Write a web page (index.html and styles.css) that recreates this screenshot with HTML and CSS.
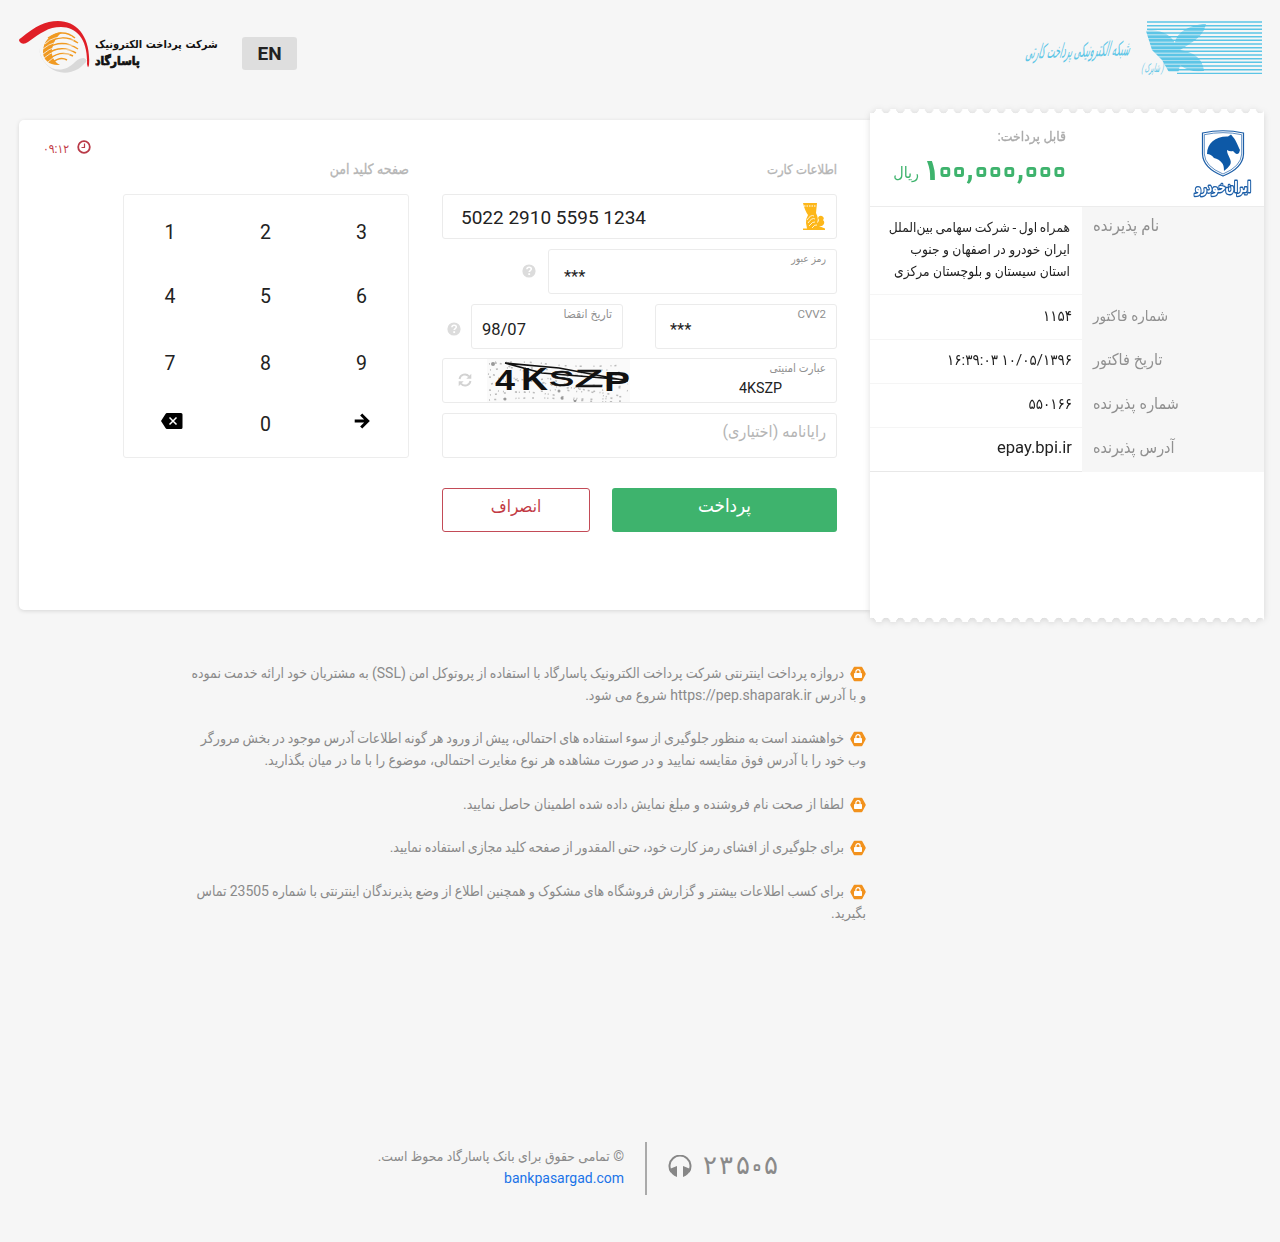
FILE: index.html
```html
<!DOCTYPE html>
<html lang="fa" dir="rtl">
<head>
<meta charset="utf-8">
<title>پرداخت الکترونیک پاسارگاد</title>
<link rel="stylesheet" href="styles.css">
</head>
<body>
<svg width="0" height="0" class="defs" aria-hidden="true">
  <symbol id="help" viewBox="0 0 14 14"><circle cx="7" cy="7" r="6.6" fill="#dcdcdc"/><path d="M4.9 5.3C5 3.8 6 3.2 7.1 3.2c1.200 0 2.200.7 2.200 1.900 0 1.500-2.100 1.500-2.100 3" fill="none" stroke="#fff" stroke-width="1.600"/><rect x="6.300" y="9.200" width="1.800" height="1.800" fill="#fff"/></symbol>
  <symbol id="lock" viewBox="0 0 16 16"><path d="M4.600.8h6.800c.5 0 .8.200 1 .6l3.200 5.900c.2.400.2.900 0 1.300l-3.200 6c-.2.400-.5.600-1 .6H4.600c-.5 0-.8-.2-1-.6L.4 8.600c-.2-.4-.2-.9 0-1.300l3.200-5.900c.2-.4.500-.6 1-.6z" fill="#f2921d"/><rect x="4" y="7" width="8" height="5" rx=".8" fill="#fff"/><path d="M5.900 7.300V5.800a2.100 2.100 0 0 1 4.200 0v1.500" fill="none" stroke="#fff" stroke-width="1.200"/></symbol>
</svg>
<header class="top">
  <svg class="shaparak" viewBox="0 0 242 60" width="242" height="60">
    <defs>
      <clipPath id="wing"><path d="M126 15C140 13 150 18 155 27C156 17 170 8 186 8Q184 20 168 29L160 34C174 36 183 43 184 55Q170 57 160 49L158 58H150L142 44L132 34Z"/></clipPath>
    </defs>
    <g stroke="#5cc5e6" stroke-width="1.400">
      <path d="M127 6H242M127 9.700H242M127 13.300H242M127 17H242M128 20.700H242M130 24.300H242M133 28H242M137 31.700H242M141 35.300H242M145 39H242M148 42.700H242M149 46.300H242M151 50H242M153 53.700H242M157 57.400H242"/>
      <path clip-path="url(#wing)" stroke-width="2.900" d="M120 9.700H242M120 13.300H242M120 17H242M120 20.700H242M120 24.300H242M120 28H242M120 31.700H242M120 35.300H242M120 39H242M120 42.700H242M120 46.300H242M120 50H242M120 53.700H242"/>
    </g>
    <g fill="#5cc5e6" text-anchor="middle">
      <text transform="translate(57 41) rotate(-2) skewX(-18)" font-size="20" textLength="104" lengthAdjust="spacingAndGlyphs">شبکه الکترونیکی پرداخت کارتی</text>
      <text transform="translate(132 56) skewX(-14)" font-size="12" textLength="22" lengthAdjust="spacingAndGlyphs">( شاپرک )</text>
    </g>
  </svg>
  <div class="brand">
    <button class="lang">EN</button>
    <div class="brand-text"><span class="brand-name">شرکت پرداخت الکترونیک</span><span class="brand-bank">پاسارگاد</span></div>
    <svg viewBox="0 0 74 58" width="74" height="58">
      <path d="M21 28A26 27 0 0 0 66 44Q71 40 66 38Q61 38 57 42C44 56 24 50 21 28Z" fill="#d9d9d9"/>
      <path d="M3 18C18 6 27 1 40 1C59 1 73 17 71 45C70 48 70 48 69 44C70 20 59 7 43 7C30 7 23 13 10 22Q6 25 3 23Q-1 20 3 18Z" fill="#e01f27"/>
      <path d="M44 12C32 13 25 22 25 32C25 40 32 46 42 45C36 42 33 36 34 29Q36 19 44 12Z" fill="#f09a22"/>
      <g fill="none" stroke="#f09a22" stroke-width="1.500"><path d="M30 18Q45 8 57 18M28 24Q44 12 60 23M28 29Q44 18 60 29M29 34Q43 24 58 33M31 39Q43 30 55 36M34 43Q42 36 49 40"/></g>
      <g fill="none" stroke="#f6f6f6" stroke-width=".8"><path d="M27 24Q35 15 54 17M25 29Q35 20 56 20M25 34Q36 24 56 25M26 38Q37 28 55 30M30 42Q39 33 52 34"/></g>
    </svg>
  </div>
</header>

<main class="checkout">
  <section class="ticket">
    <div class="teeth"></div>
    <div class="ticket-body">
      <div class="summary">
        <svg class="ikco" viewBox="0 0 60 68" width="60" height="68">
          <path d="M9.500 3Q30-1.500 50.500 3V24Q50 38 30 46Q10 38 9.500 24Z" fill="#fff" stroke="#1d5fa8" stroke-width="1.200"/>
          <path d="M11.300 4.700Q30 .6 48.700 4.700V24Q48 36.500 30 44Q12 36.500 11.300 24Z" fill="none" stroke="#1d5fa8" stroke-width=".7"/>
          <path d="M14 24C14 13 23 6 35 6.500L38 4.500L40 7C43 10 45 16 47 20L46 23Q44 25 42 23L40 21Q37 22 34 20C34 26 40 30 37 35Q35 38 31 41Q31 35 29 33Q26 29 21 28Q18 24 14 24Z" fill="#0d59a7"/>
          <text x="30" y="62" text-anchor="middle" font-size="15" font-weight="700" textLength="56" lengthAdjust="spacingAndGlyphs" fill="#fff" stroke="#1d5fa8" stroke-width="2.800" paint-order="stroke" stroke-linejoin="round">ایران‌خودرو</text>
        </svg>
        <div class="due">
          <span class="due-label">قابل پرداخت:</span>
          <div class="due-amount">
            <svg class="digits" direction="ltr" viewBox="0 0 140 36" width="140" height="36"><text y="26"><tspan class="one" x="5.500" y="27">۱</tspan><tspan x="19.300 33" y="26">۰۰</tspan><tspan class="comma" x="44">,</tspan><tspan x="55.300 69.300 83.300">۰۰۰</tspan><tspan class="comma" x="94.500">,</tspan><tspan x="105.300 119.300 133.300">۰۰۰</tspan></text></svg>
            <span>ریال</span>
          </div>
        </div>
      </div>
      <dl class="rows">
        <dt class="tall">نام پذیرنده</dt><dd class="tall"><span class="v1">همراه اول - شرکت سهامی بین‌الملل</span><span class="v2">ایران خودرو در اصفهان و جنوب</span><span class="v3">استان سیستان و بلوچستان مرکزی</span></dd>
        <dt class="narrow">شماره فاکتور</dt><dd class="first"><bdo dir="ltr">۱۱۵۴</bdo></dd>
        <dt>تاریخ فاکتور</dt><dd><bdo dir="ltr">۱۶:۳۹:۰۳ ۱۰/۰۵/۱۳۹۶</bdo></dd>
        <dt>شماره پذیرنده</dt><dd><bdo dir="ltr">۵۵۰۱۶۶</bdo></dd>
        <dt>آدرس پذیرنده</dt><dd class="site">epay.bpi.ir</dd>
      </dl>
    </div>
    <div class="teeth bottom"></div>
  </section>

  <section class="card">
    <div class="form">
      <h2>اطلاعات کارت</h2>
      <div class="field number">
        <svg viewBox="0 0 24 27" width="24" height="27"><path d="M1 0H15L14 10Q17 16 15 20Q18 18 16 15Q17 12 20 13Q23 15 21 17Q24 20 20 23H17L23 25.500V27H1V25.500H5L4 20Q4 15 6 12Q3 8 1 0Z" fill="#fdb71a"/><path d="M2 3H14" stroke="#fff" stroke-width="1" stroke-dasharray="1.500 1"/><path d="M5 17Q9 11 12 13M6 20Q10 14 13 16M7 23Q11 18 13 19M10 25Q13 21 15 22" stroke="#fff" stroke-width=".8" fill="none"/></svg>
        <span dir="ltr">5022 2910 5595 1234</span>
      </div>
      <div class="line"><div class="field pin"><label>رمز عبور</label><span>***</span></div><svg class="help pin-help" width="14" height="14"><use href="#help"/></svg></div>
      <div class="line"><div class="field cvv"><label>CVV2</label><span>***</span></div><div class="field expiry"><label>تاریخ انقضا</label><span>98/07</span></div><svg class="help" width="14" height="14"><use href="#help"/></svg></div>
      <div class="field captcha">
        <div class="captcha-input"><label>عبارت امنیتی</label><span>4KSZP</span></div>
        <svg class="captcha-image" viewBox="0 0 143 43" width="143" height="43" direction="ltr">
          <rect width="143" height="43" fill="#fafafa"/>
          <g fill="none" stroke="#bbb" stroke-width="1.500"><path stroke-dasharray="1 5 2 9 1 3 2 12" d="M2 5Q30 1 60 5T141 6M3 11Q40 5 80 14T141 11"/><path stroke-dasharray="2 7 1 4 1 11" d="M2 18Q50 25 90 15T141 20M4 25Q44 17 70 28T141 25M2 31Q40 36 80 29T141 32"/><path stroke-dasharray="1 4 2 7 2 10 1 2" d="M3 36Q36 30 72 37T141 36M2 41Q50 37 90 41T141 40M1 15L140 38M8 3L130 41"/></g>
          <g fill="#999"><circle cx="6" cy="5" r="2"/><circle cx="18" cy="40" r="1.500"/><circle cx="75" cy="39" r="1.500"/><circle cx="88" cy="42" r="1.300"/><circle cx="72" cy="32" r="1.500"/></g>
          <g font-family="Liberation Sans" fill="#111" stroke="#111" stroke-width=".7"><text x="8" y="31" font-size="30" textLength="20" lengthAdjust="spacingAndGlyphs" font-weight="700" stroke="none">4</text><text x="34" y="31" font-size="31" textLength="27" lengthAdjust="spacingAndGlyphs" font-weight="700" stroke="none">K</text><text x="62" y="27" font-size="22" textLength="25" lengthAdjust="spacingAndGlyphs">S</text><text x="88" y="28" font-size="24" textLength="28" lengthAdjust="spacingAndGlyphs">Z</text><text x="117" y="32" font-size="28" textLength="26" lengthAdjust="spacingAndGlyphs" font-weight="700" stroke="none">P</text></g>
          <path d="M18 4L72 9L141 22M18 4L55 14L141 21" fill="none" stroke="#111" stroke-width="1.700"/>
        </svg>
        <svg class="reload" viewBox="0 0 14 14" width="14" height="14"><path d="M1.500 6A5.500 5.500 0 0 1 11 3.300M12.500 8A5.500 5.500 0 0 1 3 10.700" fill="none" stroke="#d2d2d2" stroke-width="1.900"/><path d="M13.300.8V5.800H8.300ZM.7 13.200V8.200H5.700Z" fill="#d2d2d2"/></svg>
      </div>
      <div class="field email">رایانامه (اختیاری)</div>
      <div class="actions"><button class="pay">پرداخت</button><button class="cancel">انصراف</button></div>
    </div>
    <div class="secure">
      <h2>صفحه کلید امن</h2>
      <div class="keypad" dir="ltr">
        <span>1</span><span>2</span><span>3</span><span>4</span><span>5</span><span>6</span><span>7</span><span>8</span><span>9</span>
        <span class="icon"><svg viewBox="0 0 22 16" width="22" height="16"><path d="M6 0H20Q21.500 0 21.500 1.500V14.500Q21.500 16 20 16H6Q5 16 4.500 15L0 8L4.500 1Q5 0 6 0Z"/><path d="M8.500 4.500L15.500 11.500M15.500 4.500L8.500 11.500" stroke="#fff" stroke-width="1.500"/></svg></span><span>0</span><span class="icon"><svg viewBox="0 0 16 16" width="16" height="16"><path d="M.7 8H13M7.200 1.500L13.700 8L7.200 14.500" fill="none" stroke="#000" stroke-width="3"/></svg></span>
      </div>
    </div>
    <div class="timer" dir="ltr"><bdo dir="ltr">۰۹:۱۲</bdo><svg viewBox="0 0 14 14" width="14" height="14"><circle cx="7" cy="7" r="5.800" fill="none" stroke="#b93a48" stroke-width="1.800"/><path d="M7.500 3.500V7.500H4.500" fill="none" stroke="#b93a48" stroke-width="1.200"/></svg></div>
  </section>
</main>

<ul class="notes">
  <li><div><svg width="16" height="16"><use href="#lock"/></svg><span class="n1">دروازه پرداخت اینترنتی شرکت پرداخت الکترونیک پاسارگاد با استفاده از پروتوکل امن (SSL) به مشتریان خود ارائه خدمت نموده</span></div><div><span class="n2">و با آدرس https://pep.shaparak.ir شروع می شود.</span></div></li>
  <li><div><svg width="16" height="16"><use href="#lock"/></svg><span class="n3">خواهشمند است به منظور جلوگیری از سوء استفاده های احتمالی، پیش از ورود هر گونه اطلاعات آدرس موجود در بخش مرورگر</span></div><div><span class="n4">وب خود را با آدرس فوق مقایسه نمایید و در صورت مشاهده هر نوع مغایرت احتمالی، موضوع را با ما در میان بگذارید.</span></div></li>
  <li><div><svg width="16" height="16"><use href="#lock"/></svg><span class="n5">لطفا از صحت نام فروشنده و مبلغ نمایش داده شده اطمینان حاصل نمایید.</span></div></li>
  <li><div><svg width="16" height="16"><use href="#lock"/></svg><span class="n6">برای جلوگیری از افشای رمز کارت خود، حتی المقدور از صفحه کلید مجازی استفاده نمایید.</span></div></li>
  <li><div><svg width="16" height="16"><use href="#lock"/></svg><span class="n7">برای کسب اطلاعات بیشتر و گزارش فروشگاه های مشکوک و همچنین اطلاع از وضع پذیرندگان اینترنتی با شماره 23505 تماس</span></div><div><span class="n8">بگیرید.</span></div></li>
</ul>

<footer>
  <div class="phone">
    <svg class="number-text" direction="ltr" viewBox="0 0 76 36" width="76" height="36"><text y="24"><tspan x="7 23 40">۲۳۵</tspan><tspan class="zero" x="54">۰</tspan><tspan x="68">۵</tspan></text></svg>
    <svg viewBox="0 0 24 22" width="24" height="22"><path d="M3.300 17A10.500 10.500 0 1 1 20.700 17" fill="none" stroke="#878787" stroke-width="2"/><path d="M9 11V22Q3 20 1.500 14ZM15 11V22Q21 20 22.500 14Z" fill="#878787"/></svg></div>
  <div class="rights"><span class="copy">© تمامی حقوق برای بانک پاسارگاد محوظ است.</span><a>bankpasargad.com</a></div>
</footer>
</body>
</html>
```
FILE: styles.css
```css
* { box-sizing: border-box; }
body { margin: 0; width: 1280px; height: 1242px; background: #f6f6f6; color: #222; font-family: Roboto, "DejaVu Sans Condensed", "DejaVu Sans", sans-serif; font-size: 14px; white-space: nowrap; overflow: hidden; }
.defs { display: block; height: 0; }
button { font-family: inherit; border: 0; padding: 0; }
h2 { margin: 0; padding-top: 1px; font-size: 13px; font-weight: 400; -webkit-text-stroke: .3px #b5b5b5; color: #b5b5b5; line-height: 19px; }
.top { display: flex; justify-content: space-between; align-items: flex-start; height: 109px; padding: 16px 18px 0; }
.shaparak, .ikco { overflow: visible; }
.brand { display: flex; align-items: flex-start; }
.brand > svg { margin-top: 4px; }
.brand-text { display: flex; flex-direction: column; align-items: flex-end; width: 126px; padding: 20px 0 0 3px; color: #111; font-weight: 700; line-height: 17px; }
.brand-name { font-size: 11px; word-spacing: 1px; }
.brand-bank { font-size: 12px; font-weight: 900; -webkit-text-stroke: .7px #111; }
.lang { width: 55px; height: 33px; margin: 21px 0 0 24px; border-radius: 3px; background: #dedede; color: #222; font-size: 19px; font-weight: 700; }

.checkout { display: flex; align-items: flex-start; padding: 0 16px 0 19px; height: 513px; }
.ticket { width: 394px; height: 513px; z-index: 1; filter: drop-shadow(0 1px 3px rgba(0,0,0,.13)); }
.teeth { height: 5px; background: radial-gradient(circle at 50% 0, transparent 4px, #fff 4.600px) -5.600px 0 / 14.400px 5px repeat-x; }
.teeth.bottom { transform: scaleY(-1); }
.ticket-body { height: 503px; background: #fff; }
.summary { display: flex; height: 93px; border-bottom: 1px solid #ececec; }
.ikco { margin: 16px 11px 0 0; }
.due { margin-right: 127px; padding-top: 12px; }
.due-label { display: block; color: #aaa; font-size: 13.800px; -webkit-text-stroke: .3px #aaa; line-height: 20px; }
.due-amount { display: flex; align-items: flex-start; gap: 7px; padding-top: 7px; color: #3eb36d; }
.due-amount .digits { flex: none; overflow: visible; }
.due-amount text { font-size: 24px; font-weight: 700; text-anchor: middle; fill: #fff; stroke: #3eb36d; stroke-width: 6px; stroke-linejoin: round; paint-order: stroke; }
.due-amount .one, .due-amount .comma { fill: #3eb36d; stroke: none; }
.due-amount .one { font-size: 30px; }
.due-amount .comma { font-size: 30px; }
.due-amount > span { padding-top: 8px; font-size: 16px; line-height: 24px; }
.rows { display: grid; grid-template-columns: 182px 212px; grid-template-rows: 88px 45px 44px 44px 44px; margin: 0; background: #f6f6f6; }
dt { padding: 8px 0 0 11px; color: #909090; font-size: 16px; line-height: 24px; text-align: left; }
dt.narrow { padding-top: 9px; font-size: 15px; }
dd { margin: 0; padding: 8px 10px 0 0; background: #fff; border-bottom: 1px solid #f5f5f5; font-size: 15px; line-height: 24px; }
dd.first { padding-top: 9px; }
dd.tall { padding: 9px 12px 0 0; font-size: 13.700px; line-height: 22px; }
dd.tall span { display: block; }
.v1 { word-spacing: -.8px; }
dt.tall { padding-top: 7px; font-size: 16.600px; }
dd.site { font-size: 16.600px; border-color: #e8e8e8; }

.card { display: flex; flex: 1; height: 490px; margin-top: 11px; padding: 39px 33px 0 24px; border-radius: 5px 0 0 5px; background: #fff; box-shadow: 0 1px 4px rgba(0,0,0,.13); }
.form { width: 395px; }
.field { display: flex; border: 1px solid #ebebeb; border-radius: 3px; height: 45px; background: #fff; }
.field label { color: #909090; font-size: 11.500px; line-height: 18px; }
.number { margin: 15px 0 10px; padding: 8px 10px 0 18px; justify-content: space-between; }
.number span { padding-top: 1px; font-size: 19px; line-height: 28px; }
.line { display: flex; align-items: flex-start; margin-bottom: 9.500px; height: 45px; }
.pin, .cvv, .expiry { padding: 0 10px; justify-content: space-between; }
.pin { width: 289px; padding-left: 15px; }
.pin label { font-size: 10.300px; }
.pin span { padding-top: 15px; font-size: 16.500px; line-height: 24px; }
.cvv { width: 182px; padding-left: 14px; }
.cvv span { padding-top: 13px; font-size: 16.500px; line-height: 24px; }
.expiry { width: 152px; margin-right: 32px; }
.expiry label { font-size: 12px; }
.expiry span { padding-top: 13px; font-size: 16.500px; line-height: 24px; }
.help { margin: 18px 10px 0 0; }
.pin-help { margin: 15px 12px 0 0; }
.captcha { height: 45px; margin-bottom: 10px; }
.captcha-input { width: 206px; padding-right: 10px; }
.captcha-input label { display: block; }
.captcha-input span { display: block; margin: 1px 44px 0 0; line-height: 20px; font-size: 14.300px; }
.captcha-image { flex: none; }
.reload { margin: 14px 15px 0 0; }
.email { padding: 5px 10px 0; color: #b5b5b5; font-size: 16.200px; line-height: 26px; }
.actions { display: flex; gap: 22px; margin-top: 30px; }
.actions button { height: 44px; border-radius: 3px; padding-bottom: 8px; font-size: 17px; }
.actions .pay { width: 225px; background: #3eb36d; color: #fff; font-size: 18.700px; }
.actions .cancel { width: 148px; background: #fff; border: 1px solid #c34b57; color: #c23a45; }
.secure { width: 286px; margin-right: 33px; }
.secure h2 { font-size: 14px; }
.keypad { display: grid; grid-template-columns: 92px 99px 93px; grid-template-rows: 72px 64px 67px 58px; height: 264px; margin-top: 15px; border: 1px solid #ededed; border-radius: 3px; font-size: 19.500px; }
.keypad span { text-align: center; padding-top: 26px; line-height: 24px; }
.keypad span:nth-child(n+4) { padding-top: 18px; }
.keypad span:nth-child(n+7) { padding-top: 21px; }
.keypad span:nth-child(n+10) { padding-top: 15px; }
.keypad svg { display: block; margin: 0 auto; }
.keypad span:nth-child(10) svg { transform: translateX(2px); }
.timer { display: flex; align-items: flex-start; gap: 8px; height: 18px; margin: -19px auto 0 0; color: #c23a45; font-size: 12px; line-height: 18px; }

.notes { list-style: none; margin: 41px 414px 0 0; padding: 0; color: #8a8a8a; font-size: 14px; line-height: 21.700px; }
.notes li { margin-bottom: 22px; }
.notes li div { display: flex; height: 21.700px; }
.notes svg { flex: none; margin: 3px 0 0 6px; }
.n1, .n7 { word-spacing: -.35px; }
.n3 { word-spacing: -.6px; }
.n6 { word-spacing: -.7px; }

footer { display: flex; margin: 217.500px 501px 0 0; color: #8a8a8a; }
.phone { display: flex; align-items: flex-start; gap: 11px; width: 134px; height: 53px; border-left: 2px solid #aaa; }
.phone svg { flex: none; margin-top: 13px; }
.phone .number-text { margin-top: 8px; overflow: visible; }
.number-text text { font-family: "DejaVu Sans", sans-serif; font-size: 26px; text-anchor: middle; fill: #8a8a8a; }
.number-text .zero { fill: #f6f6f6; font-size: 22px; stroke: #8a8a8a; stroke-width: 4px; stroke-linejoin: round; paint-order: stroke; }
.rights { display: flex; flex-direction: column; padding: 3px 21px 0 0; font-size: 13.800px; line-height: 22px; }
.rights a { color: #1a73e8; font-size: 14px; }
```
